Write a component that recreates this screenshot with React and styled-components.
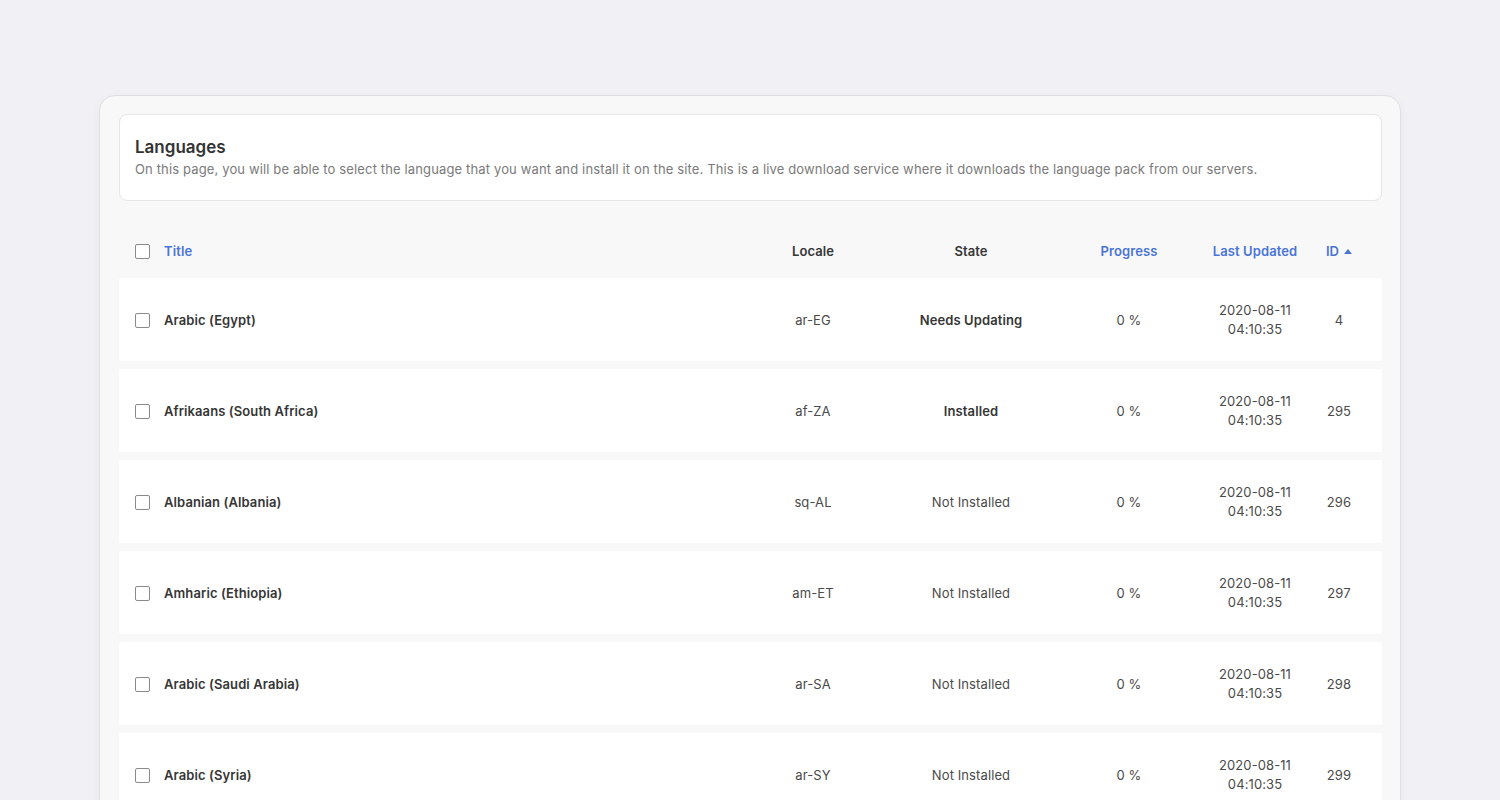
import React from "react";
import styled, { createGlobalStyle } from "styled-components";

const Global = createGlobalStyle`
  html, body { margin: 0; padding: 0; }
  body {
    background: #f0f0f5;
    font-family: Inter, "Noto Sans", sans-serif;
    color: #333;
    overflow: hidden;
  }
`;

const Page = styled.div`
  padding: 95px 99px 0 99px;
  height: 800px;
  box-sizing: border-box;
`;

const Card = styled.div`
  background: #f8f8f8;
  border: 1px solid #e0e0e4;
  border-radius: 16px;
  padding: 18px 18px 40px 19px;
  box-shadow: 0 2px 10px rgba(0, 0, 0, 0.04);
`;

const Intro = styled.div`
  background: #fff;
  border: 1px solid #e6e6e8;
  border-radius: 8px;
  padding: 20px 16px 21px 15px;
`;

const Heading = styled.h1`
  margin: 0;
  font-size: 17px;
  line-height: 24px;
  font-weight: 600;
  color: #333;
`;

const Desc = styled.p`
  margin: 0;
  font-size: 13px;
  line-height: 20px;
  letter-spacing: 0.14px;
  color: #7a7a7a;
`;

const cols = "16px 15px 14px 570px 158px 158px 158px 94px 74px 6px";

const HeadRow = styled.div`
  display: grid;
  grid-template-columns: ${cols};
  align-items: center;
  height: 44px;
  margin-top: 28px;
  margin-bottom: 5px;
  font-size: 13px;
  font-weight: 600;
`;

const Rows = styled.div`
  display: flex;
  flex-direction: column;
  gap: 8px;
`;

const Row = styled.div`
  display: grid;
  grid-template-columns: ${cols};
  align-items: center;
  height: 83px;
  padding-top: 1px;
  box-sizing: border-box;
  background: #fff;
  border-radius: 2px;
  font-size: 13px;
  color: #444;
`;

const Box = styled.span`
  grid-column: 2;
  width: 15px;
  height: 15px;
  box-sizing: border-box;
  border: 1.5px solid #8a8a8a;
  border-radius: 2px;
  background: #fff;
`;

const Cell = styled.div`
  grid-column: ${(p) => p.$col};
  text-align: ${(p) => (p.$left ? "left" : "center")};
  color: ${(p) => (p.$link ? "#4a74d6" : p.$strong ? "#363636" : "#4a4a4a")};
  font-weight: ${(p) => (p.$strong || p.$head ? 600 : 400)};
  letter-spacing: 0.1px;
  line-height: 19px;
  white-space: nowrap;
`;

const Sort = styled.span`
  display: inline-flex;
  align-items: center;
  gap: 5px;
`;

const data = [
  ["Arabic (Egypt)", "ar-EG", "Needs Updating", true, "4"],
  ["Afrikaans (South Africa)", "af-ZA", "Installed", true, "295"],
  ["Albanian (Albania)", "sq-AL", "Not Installed", false, "296"],
  ["Amharic (Ethiopia)", "am-ET", "Not Installed", false, "297"],
  ["Arabic (Saudi Arabia)", "ar-SA", "Not Installed", false, "298"],
  ["Arabic (Syria)", "ar-SY", "Not Installed", false, "299"],
];

export default function App() {
  return (
    <>
      <Global />
      <Page>
        <Card>
          <Intro>
            <Heading>Languages</Heading>
            <Desc>
              On this page, you will be able to select the language that you want and install it on the site. This is a live download service where it downloads the language pack from our servers.
            </Desc>
          </Intro>
          <HeadRow>
            <Box />
            <Cell $col={4} $left $head $link>Title</Cell>
            <Cell $col={5} $head $strong>Locale</Cell>
            <Cell $col={6} $head $strong>State</Cell>
            <Cell $col={7} $head $link>Progress</Cell>
            <Cell $col={8} $head $link>Last Updated</Cell>
            <Cell $col={9} $head $link>
              <Sort>
                ID
                <svg width="8" height="5" viewBox="0 0 8 5">
                  <path d="M0 5 L4 0 L8 5 Z" fill="#4a74d6" />
                </svg>
              </Sort>
            </Cell>
          </HeadRow>
          <Rows>
            {data.map(([title, loc, state, bold, id]) => (
              <Row key={id}>
                <Box />
                <Cell $col={4} $left $strong>{title}</Cell>
                <Cell $col={5}>{loc}</Cell>
                <Cell $col={6} $strong={bold}>{state}</Cell>
                <Cell $col={7}>0 %</Cell>
                <Cell $col={8}>
                  2020-08-11
                  <br />
                  04:10:35
                </Cell>
                <Cell $col={9}>{id}</Cell>
              </Row>
            ))}
          </Rows>
        </Card>
      </Page>
    </>
  );
}
